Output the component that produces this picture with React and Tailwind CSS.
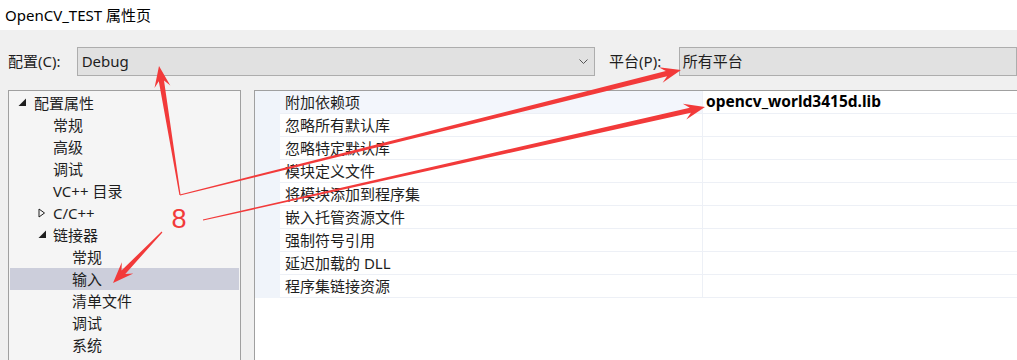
import React from "react"

const font = { fontFamily: '"Noto Sans", "Noto Sans CJK SC", sans-serif' }

const treeItems = [
  { label: "配置属性", indent: 34, icon: "open", iconX: 18 },
  { label: "常规", indent: 53 },
  { label: "高级", indent: 53 },
  { label: "调试", indent: 53 },
  { label: "VC++ 目录", indent: 53 },
  { label: "C/C++", indent: 53, icon: "closed", iconX: 38 },
  { label: "链接器", indent: 53, icon: "open", iconX: 38 },
  { label: "常规", indent: 72 },
  { label: "输入", indent: 72, selected: true },
  { label: "清单文件", indent: 72 },
  { label: "调试", indent: 72 },
  { label: "系统", indent: 72 },
]

const props = [
  ["附加依赖项", "opencv_world3415d.lib"],
  ["忽略所有默认库", ""],
  ["忽略特定默认库", ""],
  ["模块定义文件", ""],
  ["将模块添加到程序集", ""],
  ["嵌入托管资源文件", ""],
  ["强制符号引用", ""],
  ["延迟加载的 DLL", ""],
  ["程序集链接资源", ""],
]

function TreeIcon({ type }) {
  if (type === "open")
    return (
      <svg width="9" height="9" viewBox="0 0 9 9">
        <polygon points="8,0.5 8,8 0.5,8" fill="#1e1e1e" />
      </svg>
    )
  return (
    <svg width="8" height="10" viewBox="0 0 8 10">
      <polygon points="1,1 6.5,5 1,9" fill="none" stroke="#1e1e1e" strokeWidth="1" />
    </svg>
  )
}

function arrowPoints(tx, ty, px, py) {
  const dx = px - tx
  const dy = py - ty
  const L = Math.hypot(dx, dy)
  const ux = dx / L
  const uy = dy / L
  const nx = -uy
  const ny = ux
  const pt = (bx, by, along, side) => [bx + ux * along + nx * side, by + uy * along + ny * side]
  const pts = [
    pt(tx, ty, 0, 0.6),
    pt(px, py, -15, 2.6),
    pt(px, py, -21, 8),
    [px, py],
    pt(px, py, -21, -8),
    pt(px, py, -15, -2.6),
    pt(tx, ty, 0, -0.6),
  ]
  return pts.map((p) => p.map((v) => v.toFixed(1)).join(",")).join(" ")
}

const arrows = [
  [180, 195, 159, 66],
  [180, 195, 681, 70],
  [203, 220, 705, 107],
  [162, 232, 113, 283],
]

export default function App() {
  return (
    <div className="relative w-[1017px] h-[360px] overflow-hidden bg-[#f0f0f0] text-[#1e1e1e]" style={font}>
      <div className="h-[30px] bg-white pl-[5px] flex items-center text-[15px] leading-none text-black">
        OpenCV_TEST 属性页
      </div>

      <div className="flex items-center h-[29px] mt-[17px]">
        <div className="w-[77px] pl-[8px] text-[15px]">配置(C):</div>
        <div className="w-[521px] h-[29px] bg-[#e1e1e1] border border-[#adadad] flex items-center pl-[4px] pr-[6px] text-[15px]">
          <span className="flex-1">Debug</span>
          <svg width="9" height="6" viewBox="0 0 9 6">
            <polyline points="0.5,0.5 4.5,4.5 8.5,0.5" fill="none" stroke="#555" strokeWidth="1" />
          </svg>
        </div>
        <div className="w-[84px] pl-[14px] text-[15px]">平台(P):</div>
        <div className="w-[340px] h-[29px] bg-[#e1e1e1] border border-[#adadad] flex items-center pl-[3px] text-[15px]">
          所有平台
        </div>
      </div>

      <div className="flex mt-[14px] h-[300px]">
        <div className="ml-[8px] w-[233px] h-full bg-[#f5f5f5] border border-[#a0a0a0] p-px">
          {treeItems.map((it, i) => (
            <div
              key={i}
              className={`relative h-[22px] flex items-center text-[15px] ${it.selected ? "bg-[#cccedb]" : ""}`}
            >
              {it.icon && (
                <span className="absolute top-[6px]" style={{ left: it.iconX - 10 }}>
                  <TreeIcon type={it.icon} />
                </span>
              )}
              <span style={{ paddingLeft: it.indent - 10 }}>{it.label}</span>
            </div>
          ))}
        </div>

        <div className="ml-[13px] flex-1 h-full bg-white border-l border-t border-[#a0a0a0]">
          {props.map(([name, value], i) => (
            <div key={i} className="flex h-[23px]">
              <div className="w-[25px] bg-[#f0f4fa]" />
              <div
                className={`w-[423px] flex items-center pl-[5px] text-[15px] border-b border-r border-[#edf0f6] ${i === 0 ? "bg-[#f3f6fc]" : "bg-white"}`}
              >
                {name}
              </div>
              <div className="flex-1 flex items-center pl-[3px] text-[15.5px] font-bold text-black border-b border-[#edf0f6]">
                {value}
              </div>
            </div>
          ))}
        </div>
      </div>

      <svg className="absolute inset-0 pointer-events-none" width="1017" height="360">
        {arrows.map((a, i) => (
          <polygon key={i} points={arrowPoints(...a)} fill="#f23a3a" />
        ))}
        <text x="179" y="228" textAnchor="middle" fontSize="27" fill="#f23a3a" fontFamily="Liberation Sans, sans-serif">
          8
        </text>
      </svg>
    </div>
  )
}
